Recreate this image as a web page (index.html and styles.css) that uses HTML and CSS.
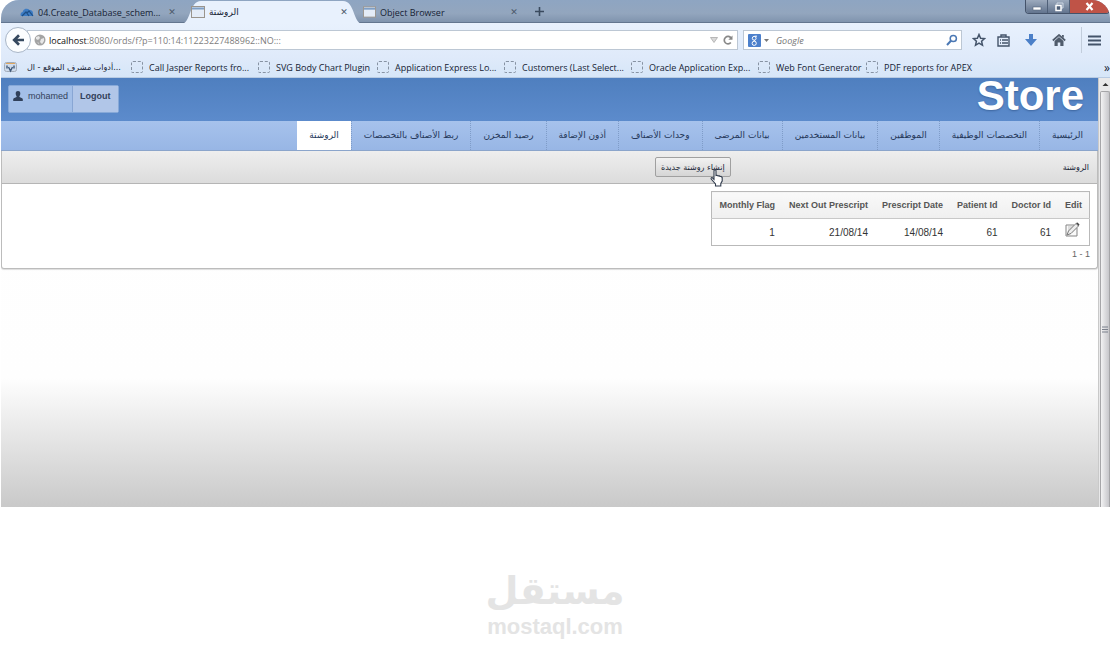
FILE: index.html
```html
<!DOCTYPE html>
<html lang="ar">
<head>
<meta charset="utf-8">
<title>الروشتة</title>
<link rel="stylesheet" href="styles.css">
</head>
<body>
<main class="window">
  <header class="titlebar">
    <div class="tab tab-first">
      <svg class="icon" width="14" height="11" viewBox="0 0 14 11"><path d="M1 9a2.600 2.600 0 0 1 1.600-4A4 4 0 0 1 9.500 3 3 3 0 0 1 13 6v3z" fill="#3d7cc4"/><path d="M2 9l4-4 3 4M7 6l2-2 4 5" fill="none" stroke="#1d4f86" stroke-width="1.200"/></svg>
      <span class="tab-title">04.Create_Database_schem...</span>
      <button class="close" aria-label="Close tab">✕</button>
    </div>
    <div class="tab tab-active">
      <svg class="tab-shape" viewBox="0 0 182 24" preserveAspectRatio="none"><path d="M0 24C10 24 8 1 20 1H162C174 1 172 24 182 24z" fill="#e8f1fd"/></svg>
      <svg class="icon" width="14" height="12" viewBox="0 0 14 12"><rect x=".5" y=".5" width="13" height="11" fill="#e4ecf7" stroke="#9a948c"/><path d="M1 2.500h12" stroke="#7f9fc6" stroke-width="2"/></svg>
      <span class="tab-title"><span dir="rtl">الروشتة</span></span>
      <button class="close" aria-label="Close tab">✕</button>
    </div>
    <div class="tab tab-last">
      <svg class="icon" width="13" height="12" viewBox="0 0 14 12"><rect x=".5" y=".5" width="13" height="11" fill="#e4ecf7" stroke="#9a948c"/><path d="M1 2.500h12" stroke="#7f9fc6" stroke-width="2"/></svg>
      <span class="tab-title">Object Browser</span>
      <button class="close" aria-label="Close tab">✕</button>
    </div>
    <button class="new-tab" aria-label="New tab"><svg width="9" height="9" viewBox="0 0 9 9"><path d="M4.500 0v9M0 4.500h9" stroke="#3a4a5e" stroke-width="1.600"/></svg></button>
    <div class="controls">
      <button class="control" aria-label="Minimize"><svg width="10" height="10" viewBox="0 0 10 10"><rect x="1" y="5" width="8" height="3" fill="#fff" stroke="#55647a" stroke-width=".6"/></svg></button>
      <button class="control" aria-label="Restore"><svg width="10" height="10" viewBox="0 0 10 10"><path d="M3 3V1h6v5H7" fill="none" stroke="#ccd6e2"/><rect x="2" y="3.500" width="5" height="5" fill="#4f6078" stroke="#fff" stroke-width="1.500"/></svg></button>
      <button class="control control-close" aria-label="Close"><svg width="9" height="9" viewBox="0 0 9 9"><path d="M1.500 1l6 7M7.500 1l-6 7" stroke="#fff" stroke-width="2.200"/></svg></button>
    </div>
  </header>

  <div class="toolbar">
    <button class="back" aria-label="Back"><svg width="13" height="12" viewBox="0 0 13 12"><path d="M7 1.200L2.200 6 7 10.800M2.500 6H12" fill="none" stroke="#35485f" stroke-width="2.700"/></svg></button>
    <div class="urlbar">
      <svg width="12" height="12" viewBox="0 0 12 12"><circle cx="6" cy="6" r="5.500" fill="#a4a4a4"/><path d="M2 3l3-1 1 2-2 2-2-1zM7 5l3-1 0 3-2 3-2-2zM3 8l2 1v1z" fill="#e8e8e8"/></svg>
      <label class="host" for="url">localhost</label>
      <input id="url" class="url-input" type="text" value=":8080/ords/f?p=110:14:11223227488962::NO:::">
      <svg width="8" height="6" viewBox="0 0 8 6"><path d="M.5.500h7L4 5.500z" fill="#d9d9d9" stroke="#a9a9a9" stroke-width=".8"/></svg>
      <button class="bare" aria-label="Reload"><svg width="10" height="10" viewBox="0 0 10 10"><path d="M7.800 7.500A3.700 3.700 0 1 1 8 3" fill="none" stroke="#888" stroke-width="1.700"/><path d="M9.500.500v4.300H5.300z" fill="#888"/></svg></button>
    </div>
    <div class="searchbar">
      <svg width="13" height="13" viewBox="0 0 13 13"><rect width="13" height="13" rx="1" fill="#4c80cc"/><circle cx="6.200" cy="4.300" r="1.900" fill="none" stroke="#fff"/><circle cx="6.200" cy="9.300" r="2.100" fill="none" stroke="#fff"/><path d="M6.500 2.200H9M6 6.200l1.500 1.300" stroke="#fff"/></svg>
      <svg width="5" height="3" viewBox="0 0 5 3"><path d="M0 0h5L2.500 3z" fill="#777"/></svg>
      <input class="search-input" type="text" placeholder="Google" aria-label="Search">
      <button class="bare" aria-label="Search"><svg width="12" height="12" viewBox="0 0 12 12"><circle cx="7.300" cy="4.500" r="3.100" fill="none" stroke="#4b78b4" stroke-width="1.500"/><path d="M5 6.800L1 11" stroke="#4b78b4" stroke-width="2"/></svg></button>
    </div>
    <div class="tools">
      <div class="tool-pair">
        <button class="bare" aria-label="Bookmark"><svg width="14" height="14" viewBox="0 0 14 14"><path d="M7 1.500l1.600 3.700 4 .4-3 2.700.9 4L7 10.200l-3.500 2.100.9-4-3-2.700 4-.4z" fill="none" stroke="#44546a" stroke-width="1.500"/></svg></button>
        <button class="bare" aria-label="Bookmarks list"><svg width="13" height="13" viewBox="0 0 13 13"><path d="M1 3h11v9H1zM3 6h1M5 6h6M3 9h1M5 9h6" fill="none" stroke="#44546a" stroke-width="1.400"/><path d="M4 3V1h5v2" fill="none" stroke="#44546a" stroke-width="1.400"/></svg></button>
      </div>
      <button class="bare" aria-label="Downloads"><svg width="12" height="12" viewBox="0 0 12 12"><path d="M4 0h4v5h4l-6 7-6-7h4z" fill="#4c80c8"/></svg></button>
      <button class="bare" aria-label="Home"><svg width="14" height="12" viewBox="0 0 14 12"><path d="M.8 6.500L7 1l6.200 5.500" fill="none" stroke="#505c6c" stroke-width="1.700"/><path d="M2.500 7L7 3l4.500 4v5H8.300V8.500H5.700V12H2.500zM10 1h1.800v3L10 2.600z" fill="#505c6c"/></svg></button>
      <button class="bare menu" aria-label="Menu"><svg width="13" height="11" viewBox="0 0 13 11"><path d="M0 1.500h13M0 5.500h13M0 9.500h13" stroke="#44546a" stroke-width="2"/></svg></button>
    </div>
  </div>

  <nav class="bookmarks">
    <a class="bookmark bookmark-arabic" href="#"><svg width="13" height="12" viewBox="0 0 13 12"><rect x=".5" y="1.500" width="12" height="9" rx="2" fill="#cfdcec" stroke="#a2acb9"/><path d="M2 2.500h9" stroke="#e0a860"/><path d="M4.500 6l2 4 2-4M3 4.500v3M10 4.500v3" fill="none" stroke="#3f5878" stroke-width="1.400"/></svg><span dir="rtl">...أدوات مشرف الموقع - ال</span></a>
    <a class="bookmark" href="#"><i class="blank"></i>Call Jasper Reports fro...</a>
    <a class="bookmark bookmark-short" href="#"><i class="blank"></i>SVG Body Chart Plugin</a>
    <a class="bookmark" href="#"><i class="blank"></i>Application Express Lo...</a>
    <a class="bookmark" href="#"><i class="blank"></i>Customers (Last Select...</a>
    <a class="bookmark" href="#"><i class="blank"></i>Oracle Application Exp...</a>
    <a class="bookmark bookmark-tight" href="#"><i class="blank"></i>Web Font Generator</a>
    <a class="bookmark" href="#"><i class="blank"></i>PDF reports for APEX</a>
    <button class="bare more" aria-label="More bookmarks">»</button>
  </nav>

  <div class="viewport">
    <section class="app">
      <header class="app-header">
        <div class="user-box">
          <span class="user"><svg width="10" height="10" viewBox="0 0 10 10"><path d="M5 0c1.700 0 2.500 1.200 2.300 2.800C7.200 4.300 6.500 5 6.300 5.700c.3.800 3.200 1 3.500 2.300V10H.2V8c.3-1.300 3.200-1.500 3.500-2.300-.2-.7-.9-1.400-1-2.900C2.500 1.200 3.300 0 5 0z" fill="#30405a"/></svg>mohamed</span>
          <a class="logout" href="#">Logout</a>
        </div>
        <h1 class="brand">Store</h1>
      </header>
      <nav class="menu-tabs" dir="rtl">
        <a href="#">الرئيسية</a>
        <a href="#">التخصصات الوظيفية</a>
        <a href="#">الموظفين</a>
        <a href="#">بيانات المستخدمين</a>
        <a href="#">بيانات المرضى</a>
        <a href="#">وحدات الأصناف</a>
        <a href="#">أذون الإضافة</a>
        <a href="#">رصيد المخزن</a>
        <a href="#">ربط الأصناف بالتخصصات</a>
        <a class="current" href="#">الروشتة</a>
      </nav>
      <section class="region" dir="rtl">
        <div class="region-head">
          <h2>الروشتة</h2>
          <div class="action">
            <button class="create">إنشاء روشتة جديدة</button>
            <svg class="pointer" width="15" height="18" viewBox="0 0 15 18"><path d="M4 1.500c0-1 2-1 2 0v5l1-.2 1 .7 1-.3 1 .8 1-.2 1.200 1.200V12l-1.400 2.500V17H5.500v-2L1.200 10c-.5-1 .7-1.800 1.500-1L4 10.300z" fill="#fff" stroke="#303b4c" stroke-width="1.100"/></svg>
          </div>
        </div>
        <div class="region-body">
          <div class="report" dir="ltr">
            <table>
              <thead><tr><th>Monthly Flag</th><th>Next Out Prescript</th><th>Prescript Date</th><th>Patient Id</th><th>Doctor Id</th><th>Edit</th></tr></thead>
              <tbody><tr><td>1</td><td>21/08/14</td><td>14/08/14</td><td>61</td><td>61</td><td><a class="edit" href="#" aria-label="Edit"><svg width="15" height="15" viewBox="0 0 15 15"><path d="M12 6v8H1V3h8" fill="#fafafa" stroke="#858585"/><path d="M3 5h5M3 7h4M3 9h2" stroke="#c0c0c0"/><path d="M2 13l1.500-4L11 1.500l2.500 2.500-7.500 7.500z" fill="#eee" stroke="#777"/><path d="M11 1l1.500-.5L14.500 2.500 13.700 4z" fill="#454545"/></svg></a></td></tr></tbody>
            </table>
            <div class="pagination">1 - 1</div>
          </div>
        </div>
      </section>
    </section>
    <div class="scrollbar">
      <svg width="12" height="13" viewBox="0 0 12 13"><path d="M3.500 8L6.500 5 9.500 8z" fill="#333"/></svg>
      <div class="thumb"><svg width="6" height="7" viewBox="0 0 6 7"><path d="M0 1h6M0 3.500h6M0 6h6" stroke="#7b808c"/></svg></div>
    </div>
  </div>
</main>
<footer class="watermark">
  <div class="mark-arabic" dir="rtl">مستقل</div>
  <div class="mark-latin">mostaql.com</div>
</footer>
</body>
</html>
```

FILE: styles.css
```css
* { box-sizing: border-box; }
body { margin: 0; background: #fff; font-family: "Liberation Sans", "DejaVu Sans", sans-serif; }
button { font: inherit; color: inherit; padding: 0; border: 0; background: none; }
a { color: inherit; text-decoration: none; }
svg { display: block; flex: none; }

.window { margin-left: 1px; border-radius: 18px 18px 0 0; overflow: hidden; background: #dfebfa; color: #152234; font-family: "Open Sans", "DejaVu Sans", sans-serif; font-size: 9px; font-weight: 500; }

.titlebar { display: flex; align-items: stretch; height: 23px; padding-left: 5px; background: linear-gradient(#8ea5c2, #93a6be 60%, #8094ae); border-bottom: 1px solid #63768f; }
.tab { position: relative; display: flex; align-items: center; gap: 4px; height: 24px; }
.tab > * { position: relative; }
.tab-title { flex: 1; text-align: left; white-space: nowrap; }
.tab-first { width: 175px; padding: 0 4px 0 14px; }
.tab-active { width: 182px; padding: 0 14px 0 10px; z-index: 1; }
.tab-active .tab-title { font-family: "DejaVu Sans", sans-serif; }
.tab > .tab-shape { position: absolute; inset: 0; width: 100%; height: 100%; }
.tab-last { width: 160px; padding: 0 4px 0 0; }
.close { width: 10px; font-family: "DejaVu Sans", sans-serif; font-size: 9px; color: #4d596a; }
.new-tab { padding: 0 12px; }
.controls { display: flex; margin-left: auto; height: 14px; border: 1px solid #44536a; border-top: 0; border-radius: 0 0 4px 4px; overflow: hidden; }
.control { display: grid; place-items: center; width: 22px; background: linear-gradient(#9caabd, #62748e); border-right: 1px solid #4f6078; }
.control-close { width: 39px; background: #bf5347; border: 0; }

.toolbar { display: flex; align-items: center; height: 34px; padding: 0 9px 0 4px; background: linear-gradient(#e8f1fd, #dfeafa); }
.back { display: grid; place-items: center; width: 26px; height: 26px; border: 1px solid #a9b6c7; border-radius: 50%; background: #fbfdff; z-index: 1; }
.urlbar, .searchbar { display: flex; align-items: center; height: 20px; background: #fff; border: 1px solid #bcc7d4; }
.urlbar { flex: 1; min-width: 0; margin-left: -4px; padding: 0 4px 0 6px; }
.host { margin-left: 3px; color: #111; }
.url-input, .search-input { flex: 1; min-width: 0; padding: 0; border: 0; outline: 0; background: none; font: inherit; font-weight: 400; color: #7d7d7d; }
.urlbar .bare { margin-left: 5px; }
.searchbar { width: 219px; margin-left: 5px; padding: 0 3px 0 4px; gap: 3px; }
.search-input { padding-left: 4px; font-style: italic; }
.search-input::placeholder { color: #777; }
.tools { display: flex; align-items: center; gap: 15px; margin-left: 10px; }
.tool-pair { display: flex; align-items: center; gap: 11px; }
.tools .menu { height: 26px; padding-left: 6px; border-left: 1px solid #c2cddb; }

.bookmarks { display: flex; align-items: center; height: 21px; padding: 0 0 0 3px; background: linear-gradient(#dfeafa, #d6e6f8); border-bottom: 1px solid #b8cbe3; }
.bookmark { display: flex; align-items: center; gap: 6px; width: 127px; white-space: nowrap; }
.bookmark-arabic { gap: 10px; font-family: "DejaVu Sans", sans-serif; font-size: 8px; }
.bookmark-short { width: 119px; }
.bookmark-tight { width: 108px; }
.blank { width: 12px; height: 12px; border: 1px dashed #8793a3; border-radius: 2px; }
.more { margin-left: auto; font-size: 12px; }

.viewport { display: flex; min-height: 429px; background: linear-gradient(#fff, #fefefe 70%, #c9c9c9); }
.app { flex: 1; min-width: 0; font-family: "Liberation Sans", "DejaVu Sans", sans-serif; }
.app-header { display: flex; justify-content: space-between; align-items: flex-start; height: 43px; padding: 0 14px 0 7px; background: linear-gradient(#4f7fbf, #5c8bcc); }
.user-box { display: flex; height: 28px; margin-top: 7px; border: 1px solid #87a9d8; border-radius: 2px; line-height: 20px; color: #33415a; background: #a3bfe8; }
.user { display: flex; align-items: center; gap: 5px; height: 20px; padding: 0 4px; }
.logout { padding: 0 7px; font-weight: bold; background: #b1c6e8; border-left: 1px solid #88a6d4; }
.brand { margin: 0; font-size: 42px; line-height: 36px; color: #fff; text-shadow: 0 1px 2px #3d659d; }

.menu-tabs { display: flex; height: 30px; padding-right: 3px; background: linear-gradient(#a6c2ec, #98b6e5); border-bottom: 1px solid #8ba5cb; font-family: "DejaVu Sans", sans-serif; font-size: 9px; line-height: 29px; color: #25385a; }
.menu-tabs a { padding: 0 12px; white-space: nowrap; border-left: 1px dotted #7f9cc8; }
.menu-tabs .current { background: #fff; border: 0; }

.region { border: 1px solid #bcbcbc; border-top: 0; border-radius: 0 0 3px 3px; box-shadow: 0 1px 1px #ddd; background: #fff; }
.region-head { display: grid; grid-template-columns: 5fr auto 9fr; align-items: center; height: 33px; padding: 0 8px; background: linear-gradient(#eee, #dcdcdc); border-bottom: 1px solid #b5b5b5; font-family: "DejaVu Sans", sans-serif; }
.region-head h2 { margin: 0; font-size: 8px; font-weight: normal; }
.action { position: relative; }
.create { display: block; height: 20px; padding: 0 5px; border: 1px solid #a0a0a0; border-radius: 2px; background: linear-gradient(#f2f2f2, #d5d5d5); font-size: 8px; white-space: nowrap; }
.pointer { position: absolute; right: 6px; top: 12px; }
.region-body { display: flex; padding: 7px 7px 5px; }
table { border-collapse: collapse; border: 1px solid #b9b9b9; }
th, td { padding: 0 7px; text-align: right; white-space: nowrap; }
th { height: 27px; color: #555; background: linear-gradient(#f9f9f9, #efefef); border-bottom: 1px solid #c8c8c8; }
td { height: 27px; font-size: 10px; color: #333; }
.edit { display: block; padding-bottom: 5px; }
.pagination { text-align: right; line-height: 17px; color: #666; }

.scrollbar { display: flex; flex-direction: column; width: 12px; background: #e9e9ea; border-left: 1px solid #c9c9c9; }
.thumb { flex: 1; display: grid; place-items: center; margin-left: 1px; padding-top: 60px; border: 1px solid #a5a5a8; border-bottom: 0; border-radius: 2px 2px 0 0; background: linear-gradient(90deg, #f2f2f3, #c6c6ca); }

.watermark { display: flex; flex-direction: column; align-items: center; padding-top: 61px; color: #e4e4e4; font-weight: bold; }
.mark-arabic { font-family: "DejaVu Sans", sans-serif; font-size: 38px; line-height: 46px; }
.mark-latin { font-size: 22px; line-height: 26px; }
```
